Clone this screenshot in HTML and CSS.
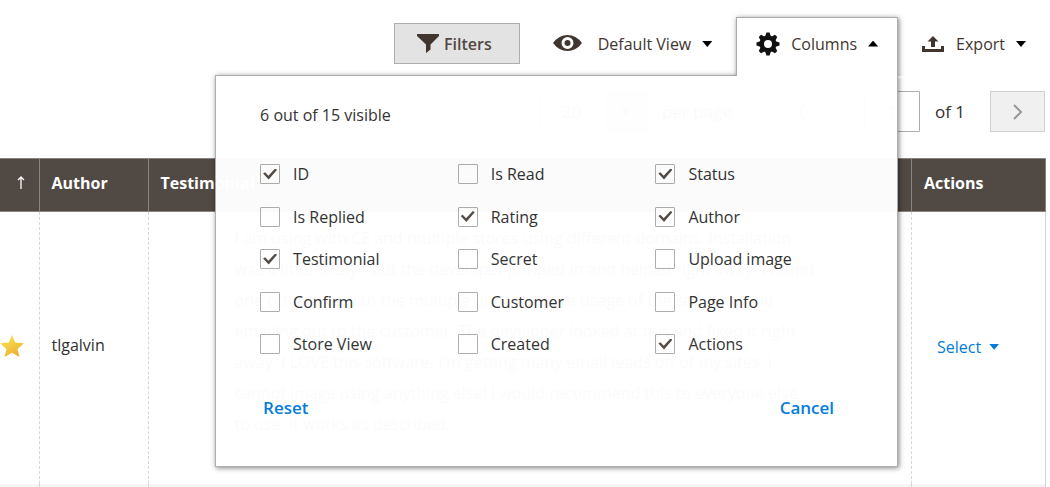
FILE: index.html
```html
<!DOCTYPE html>
<html lang="en">
<head>
<meta charset="utf-8">
<title>Testimonials</title>
<link rel="stylesheet" href="styles.css">
</head>
<body>
<main class="page">
  <div class="toolbar">
    <button class="filters" type="button">
      <svg width="22" height="19" viewBox="0 0 22 19" aria-hidden="true"><path fill="#41362f" d="M0 0h22v2l-8.500 8.500v5L9 19v-8.500L0 2z"/></svg>
      Filters
    </button>
    <button class="tool view" type="button">
      <svg width="29" height="16" viewBox="0 0 29 16" aria-hidden="true"><path fill="#41362f" fill-rule="evenodd" d="M0 8Q6 0 14.500 0T29 8Q23 16 14.500 16T0 8zM14.500 2a6 6 0 1 0 0 12a6 6 0 0 0 0-12z"/><circle cx="14.500" cy="8" r="3" fill="#41362f"/></svg>
      <span>Default View</span><i class="caret"></i>
    </button>
    <div class="columns">
      <button class="tool tab" type="button" aria-expanded="true">
        <svg width="24" height="24" viewBox="-12 -12 24 24" aria-hidden="true"><g fill="#111"><path fill-rule="evenodd" d="M0-8.500a8.500 8.500 0 1 0 0 17a8.500 8.500 0 0 0 0-17zm0 4.500a4 4 0 1 1 0 8a4 4 0 0 1 0-8z"/><path id="tooth" d="M-3-7L-1.600-11.500h3.200L3-7z"/><use href="#tooth" transform="rotate(45)"/><use href="#tooth" transform="rotate(90)"/><use href="#tooth" transform="rotate(135)"/><use href="#tooth" transform="rotate(180)"/><use href="#tooth" transform="rotate(225)"/><use href="#tooth" transform="rotate(270)"/><use href="#tooth" transform="rotate(315)"/></g></svg>
        <span>Columns</span><i class="caret up"></i>
      </button>
      <form class="panel">
        <p class="count">6 out of 15 visible</p>
        <div class="options">
          <label><input type="checkbox" checked>ID</label>
          <label><input type="checkbox">Is Read</label>
          <label><input type="checkbox" checked>Status</label>
          <label><input type="checkbox">Is Replied</label>
          <label><input type="checkbox" checked>Rating</label>
          <label><input type="checkbox" checked>Author</label>
          <label><input type="checkbox" checked>Testimonial</label>
          <label><input type="checkbox">Secret</label>
          <label><input type="checkbox">Upload image</label>
          <label><input type="checkbox">Confirm</label>
          <label><input type="checkbox">Customer</label>
          <label><input type="checkbox">Page Info</label>
          <label><input type="checkbox">Store View</label>
          <label><input type="checkbox">Created</label>
          <label><input type="checkbox" checked>Actions</label>
        </div>
        <div class="panel-actions">
          <button type="reset">Reset</button>
          <button type="button">Cancel</button>
        </div>
      </form>
    </div>
    <button class="tool export" type="button">
      <svg width="22" height="16" viewBox="0 0 22 16" aria-hidden="true"><path fill="#41362f" d="M0 10h3v3h16v-3h3v6H0zM11 0l5.500 5.500H13V11H9V5.500H5.500z"/></svg>
      <span>Export</span><i class="caret"></i>
    </button>
  </div>

  <div class="pager">
    <button class="size" type="button"><span>20</span><b><i class="caret"></i></b></button>
    <span class="per">per page</span>
    <button class="step prev" type="button" aria-label="Previous page"><svg width="10" height="16" viewBox="0 0 10 16"><path d="M9 1L2 8l7 7"/></svg></button>
    <input class="current" id="current" type="text" value="1" aria-label="Current page">
    <label class="of" for="current">of 1</label>
    <button class="step next" type="button" aria-label="Next page"><svg width="10" height="16" viewBox="0 0 10 16"><path d="M1 1l7 7-7 7"/></svg></button>
  </div>

  <table class="grid">
    <colgroup><col class="c-rate"><col class="c-author"><col><col class="c-actions"></colgroup>
    <thead><tr>
      <th class="sort"><svg width="8" height="14" viewBox="0 0 8 14" role="img" aria-label="Sorted ascending"><path fill="none" stroke="#fff" stroke-width="1.300" d="M4 13V1M1 4l3-3 3 3"/></svg></th>
      <th>Author</th><th>Testimonial</th><th>Actions</th>
    </tr></thead>
    <tbody>
      <tr>
        <td class="rate"><svg width="24" height="22" viewBox="0 0 24 22" role="img" aria-label="Star"><defs><linearGradient id="gold" x1="0" y1="0" x2=".5" y2="1"><stop offset="0" stop-color="#f8ee4c"/><stop offset="1" stop-color="#eeb03a"/></linearGradient></defs><path fill="url(#gold)" d="M12 0l3.300 7.600L24 8.300l-6.500 5.700 2 8L12 17.700 4.500 22l2-8L0 8.300l8.700-.7z"/></svg></td>
        <td>tlgalvin</td>
        <td class="quote">I am using with CE and multiple stores using different domains. Installation<br>was a little tricky - but the developer jumped in and helped right away. I found<br>one other bug with the multiple domain/store usage of the software and<br>emailing out to the customer. The developer looked at this and fixed it right<br>away. I LOVE this software. I'm getting many email leads off of my sites. I<br>cannot image using anything else! I would recommend this to everyone else<br>to use. It works as described.</td>
        <td class="act"><button type="button">Select<i class="caret"></i></button></td>
      </tr>
      <tr class="alt"><td></td><td></td><td></td><td></td></tr>
    </tbody>
  </table>
</main>
</body>
</html>
```
FILE: styles.css
```css
* { box-sizing: border-box; }
body {
  margin: 0;
  background: #fff;
  color: #303030;
  font: 16px/20px "Open Sans", "Noto Sans", sans-serif;
}
button {
  padding: 0;
  border: 0;
  background: none;
  color: inherit;
  font: inherit;
  cursor: pointer;
}
svg { display: block; flex: none; }
.page { padding-right: 4px; }

.caret {
  display: block;
  width: 10px;
  height: 6px;
  background: #000;
  clip-path: polygon(0 0, 100% 0, 50% 100%);
}
.caret.up { clip-path: polygon(50% 0, 100% 100%, 0 100%); }

/* Toolbar */
.toolbar {
  display: flex;
  justify-content: flex-end;
  align-items: flex-start;
  padding-top: 17px;
}
.filters {
  display: flex;
  align-items: center;
  gap: 5px;
  height: 41px;
  margin: 6px 33px 0 0;
  padding: 0 27px 0 22px;
  border: 1px solid #adadad;
  background: #e3e3e3;
  color: #514943;
  font-weight: 600;
}
.tool {
  display: flex;
  align-items: center;
  height: 54px;
  color: #41362f;
}
.view { margin-right: 24px; }
.view svg { margin-top: -2px; }
.view span { margin: 0 11px 0 16px; }
.export { padding: 0 20px 0 24px; }
.export span { margin: 0 11px 0 12px; }
.columns { position: relative; }
.tab {
  position: relative;
  z-index: 3;
  height: 59px;
  padding: 0 19px 7px;
  border: 1px solid #adadad;
  border-bottom: 0;
  background: #fff;
  box-shadow: 1px 1px 5px rgba(0, 0, 0, .5);
  clip-path: inset(-8px -8px 0 -8px);
}
.tab span { margin: 0 11px; }

/* Column chooser */
.panel {
  position: absolute;
  z-index: 2;
  top: 58px;
  right: 0;
  width: 683px;
  padding: 29px 44px 48px;
  border: 1px solid #adadad;
  background: #fff;
  box-shadow: 1px 1px 5px rgba(0, 0, 0, .5);
  opacity: .98;
}
.count { margin: 0 0 39px; }
.options {
  display: grid;
  grid-template-columns: 1fr 1fr 1fr;
  grid-auto-rows: 20px;
  align-content: space-between;
  min-height: 190px;
}
.options label {
  display: flex;
  align-items: center;
  gap: 13px;
}
.options input {
  appearance: none;
  display: grid;
  place-items: center;
  width: 20px;
  height: 20px;
  margin: 0;
  border: 1px solid #adadad;
  border-radius: 1px;
  background: #fff;
}
.options input:checked::before {
  content: "";
  width: 14px;
  height: 11px;
  background: #514943;
  clip-path: polygon(0 45%, 14% 34%, 38% 65%, 86% 0, 100% 12%, 40% 100%);
}
.panel-actions {
  display: flex;
  justify-content: space-between;
  margin-top: 44px;
  padding: 0 19px 0 3px;
  color: #007bdb;
  font-size: 17px;
  font-weight: 600;
}

/* Pager */
.pager {
  display: flex;
  justify-content: flex-end;
  align-items: center;
  margin-top: 15px;
  padding-right: 1px;
  font-size: 17px;
}
.size {
  display: flex;
  align-items: center;
  justify-content: space-between;
  width: 108px;
  height: 41px;
  padding-left: 22px;
  border: 1px solid #adadad;
}
.size b {
  display: grid;
  place-items: center;
  width: 40px;
  height: 39px;
  background: #e3e3e3;
}
.per { margin: 0 42px 0 15px; }
.step {
  display: grid;
  place-items: center;
  width: 55px;
  height: 41px;
  border: 1px solid #d0d0d0;
  background: #f0f0f0;
}
.step svg { fill: none; stroke: #999; stroke-width: 2; }
.prev { margin-right: 35px; border-color: #fff #d0d0d0 #fff #fff; background: #fff; }
.current {
  width: 56px;
  height: 41px;
  padding: 0;
  border: 1px solid #adadad;
  border-radius: 1px;
  color: #303030;
  font: inherit;
  text-align: center;
}
.of { margin: 0 25px 0 15px; }

/* Grid */
.grid {
  width: 100%;
  margin-top: 26px;
  border-collapse: collapse;
  table-layout: fixed;
}
.c-rate { width: 39px; }
.c-author { width: 109px; }
.c-actions { width: 134px; }
.grid th {
  height: 53px;
  padding: 0 12px 5px;
  border: 1px solid #8a837f;
  background: #514943;
  color: #fff;
  font-weight: 700;
  text-align: left;
}
.grid th.sort { padding: 0 12px 5px 17px; border-left: 0; }
.grid td {
  height: 272px;
  padding: 0 12px 6px;
  border-left: 1px dashed #d6d6d6;
}
.grid td:first-child { border-left: 0; }
.grid td:last-child { border-right: 1px solid #d6d6d6; }
.grid td.rate { padding: 0 0 4px; }
.grid td.quote {
  padding: 0 12px 32px 86px;
  line-height: 31px;
  white-space: nowrap;
}
.grid td.act { padding-bottom: 2px; }
.act button {
  display: flex;
  align-items: center;
  gap: 8px;
  margin-left: 13px;
  color: #007bdb;
}
.act .caret { background: #007bdb; }
.grid .alt td { height: 4px; padding: 0; background: #f5f5f5; }
```
